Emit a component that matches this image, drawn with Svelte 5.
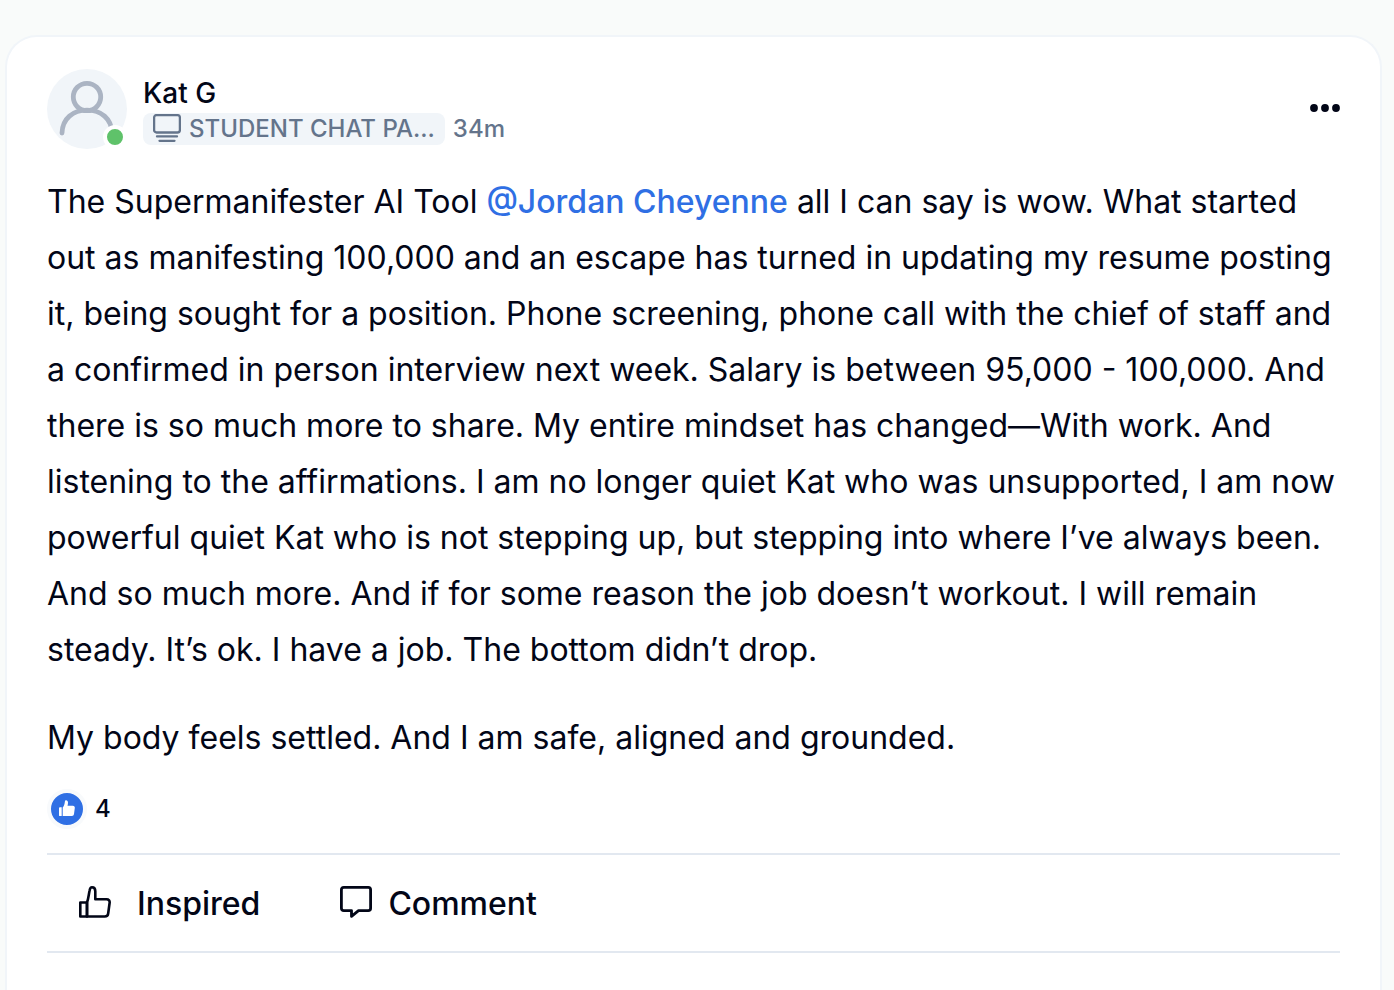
<script>
	let post = {
		author: 'Kat G',
		space: 'STUDENT CHAT PA...',
		time: '34m',
		likes: 4
	};
	let liked = false;
	$: likeCount = post.likes + (liked ? 1 : 0);
</script>

<main class="feed">
	<article class="post">
		<header class="post-header">
			<div class="avatar">
				<svg viewBox="0 0 80 80" fill="none" stroke="#abb4c3" stroke-width="4.8" stroke-linecap="round">
					<circle cx="40" cy="28" r="13.7" />
					<path d="M15 64C15.5 49.5 26 41.2 40 41.2S64.5 49.5 65 64" />
				</svg>
				<span class="online"></span>
			</div>
			<div class="post-meta">
				<a class="author" href="#author">{post.author}</a>
				<div class="post-details">
					<a class="space" href="#space">
						<svg viewBox="0 0 28 30" fill="none" stroke="#64748b" stroke-width="2.3" stroke-linecap="round">
							<rect x="1.1" y="1.1" width="25.8" height="17.4" rx="2.5" />
							<path d="M4 22.4H24M6.5 26.8H21.5" />
						</svg>
						<span>{post.space}</span>
					</a>
					<span class="time">{post.time}</span>
				</div>
			</div>
			<button class="more" aria-label="More options">
				<svg viewBox="0 0 30 8" fill="#020617">
					<circle cx="4" cy="4" r="3.9" />
					<circle cx="15" cy="4" r="3.9" />
					<circle cx="26" cy="4" r="3.9" />
				</svg>
			</button>
		</header>

		<div class="post-body">
			<p>
				The Supermanifester AI Tool <a href="#mention">@Jordan Cheyenne</a> all I can say is wow. What
				started out as manifesting 100,000 and an escape has turned in updating my resume posting it,
				being sought for a position. Phone screening, phone call with the chief of staff and a confirmed
				in person interview next week. Salary is between 95,000 - 100,000. And there is so much more to
				share. My entire mindset has changed—With work. And listening to the affirmations. I am no
				longer quiet Kat who was unsupported, I am now powerful quiet Kat who is not stepping up, but
				stepping into where I’ve always been. And so much more. And if for some reason the job doesn’t
				workout. I will remain steady. It’s ok. I have a job. The bottom didn’t drop.
			</p>
			<p>My body feels settled. And I am safe, aligned and grounded.</p>
		</div>

		<button class="reactions" aria-label="{likeCount} reactions">
			<span class="reaction-icon">
				<svg viewBox="0 0 32 32" fill="#fff">
					<path d="M8 15.2c0-.6.3-.9.9-.9h1.8v8.8H8.9c-.6 0-.9-.3-.9-.9z" />
					<path d="M11.7 14.4c1.5-1.6 1.9-3.6 2.2-6 .1-.8.6-1.2 1.2-1.2 1.2 0 1.9 1 1.9 2.3 0 1.2-.2 2.1-.5 3.2h5.3c1.5 0 2.2 1 2 2.4l-.8 6c-.2 1.3-.9 2-2.1 2h-9.2z" />
				</svg>
			</span>
			<span>{likeCount}</span>
		</button>

		<div class="actions">
			<button class="like" aria-pressed={liked} on:click={() => (liked = !liked)}>
				<svg viewBox="0 0 32 32" fill="none" stroke="#020617" stroke-width="2.6" stroke-linejoin="round">
					<path d="M1.3 16.5H8V30.5H1.3Z" />
					<path d="M8 16.5C9.5 12.5 9.7 8.5 10.6 4.5C11 2.2 11.7 1.3 13 1.3C15.2 1.3 16.3 3 16.3 5.2V13.3H27.5C29.8 13.3 31 14.8 30.6 17L29.2 27.3C29 29.5 27.8 30.5 25.7 30.5H8Z" />
				</svg>
				Inspired
			</button>
			<button>
				<svg viewBox="0 0 32 32" fill="none" stroke="#020617" stroke-width="2.8" stroke-linejoin="round">
					<path d="M3.8 1.4H28.2Q30.6 1.4 30.6 3.8V22.2Q30.6 24.6 28.2 24.6H18.5L11.5 30.3V24.6H3.8Q1.4 24.6 1.4 22.2V3.8Q1.4 1.4 3.8 1.4Z" />
				</svg>
				Comment
			</button>
		</div>
	</article>
</main>

<style>
	:global(body) {
		margin: 0;
		background: #f9fbfa;
	}
	.feed {
		display: flex;
		flex-direction: column;
		box-sizing: border-box;
		min-height: 100vh;
		padding: 35px 12px 0 5px;
		font-family: Inter, sans-serif;
		color: #020617;
	}
	.post {
		flex: 1;
		padding: 32px 40px 0;
		background: #fff;
		border: 2px solid #f1f5f9;
		border-bottom: 0;
		border-radius: 32px 32px 0 0;
	}
	a {
		color: inherit;
		text-decoration: none;
	}
	button {
		display: flex;
		align-items: center;
		padding: 0;
		border: 0;
		background: none;
		color: inherit;
		font: inherit;
		cursor: pointer;
	}
	svg {
		display: block;
		flex: none;
	}

	.post-header {
		display: flex;
		align-items: center;
		gap: 16px;
	}
	.avatar {
		position: relative;
		flex: none;
		width: 80px;
		height: 80px;
		border-radius: 50%;
		background: #f1f5f9;
	}
	.online {
		position: absolute;
		right: 0;
		bottom: 0;
		width: 16px;
		height: 16px;
		border: 4px solid #fff;
		border-radius: 50%;
		background: #5fc26a;
	}
	.post-meta {
		flex: 1;
		min-width: 0;
	}
	.author {
		display: block;
		font-size: 28px;
		font-weight: 500;
		line-height: 40px;
	}
	.post-details {
		display: flex;
		gap: 8px;
		font-size: 24px;
		font-weight: 500;
		line-height: 32px;
		color: #64748b;
	}
	.space {
		display: flex;
		align-items: center;
		gap: 8px;
		padding: 0 10px;
		border-radius: 8px;
		background: #f1f5f9;
	}
	.space svg {
		width: 28px;
		height: 30px;
	}
	.space span {
		white-space: nowrap;
	}
	.more {
		padding-bottom: 2px;
	}
	.more svg {
		width: 30px;
		height: 8px;
	}

	.post-body {
		margin-top: 25px;
		font-size: 32px;
		line-height: 56px;
	}
	.post-body p {
		margin: 0 0 32px;
	}
	.post-body p:last-child {
		margin: 0;
	}
	.post-body a {
		color: #2f6fe4;
		font-weight: 500;
	}

	.reactions {
		gap: 8px;
		margin: 23px 0 24px;
		font-size: 24px;
		font-weight: 500;
		line-height: 40px;
	}
	.reaction-icon {
		width: 32px;
		height: 32px;
		border: 4px solid #f8fafc;
		border-radius: 50%;
		background: #2f6fe4;
	}

	.actions {
		display: flex;
		gap: 80px;
		padding: 0 32px;
		border: 2px solid #e2e8f0;
		border-width: 2px 0;
	}
	.actions button {
		gap: 16px;
		height: 96px;
		font-size: 32px;
		font-weight: 500;
	}
	.actions .like {
		gap: 26px;
	}
	.actions svg {
		width: 32px;
		height: 32px;
		margin-bottom: 2px;
	}
</style>
